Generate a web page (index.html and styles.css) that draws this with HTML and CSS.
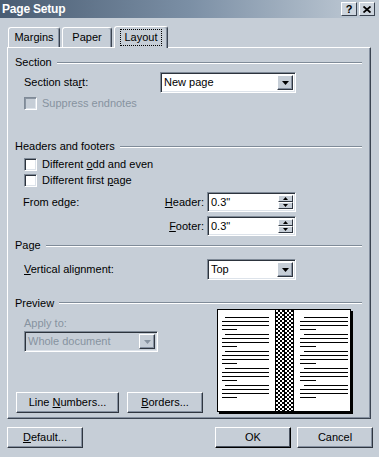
FILE: index.html
```html
<!DOCTYPE html>
<html lang="en">
<head>
    <meta charset="UTF-8">
    <meta name="viewport" content="width=device-width, initial-scale=1.0">
    <title>Page Setup</title>
    <link rel="stylesheet" href="styles.css">
</head>
<body>
    <div class="titlebar">
        <span class="title">Page Setup</span>
        <div class="title-buttons">
            <span class="tbtn">?</span>
            <span class="tbtn">
                <svg width="8" height="7" viewBox="0 0 8 7"><path d="M0.5 0.5L7.5 6.5M7.5 0.5L0.5 6.5" stroke="#000" stroke-width="1.8"/></svg>
            </span>
        </div>
    </div>

    <div class="tabs">
        <div class="tab t-margins">Margins</div>
        <div class="tab t-paper">Paper</div>
        <div class="tab t-layout active"><span class="focus">Layout</span></div>
    </div>

    <div class="panel">
        <div class="group g-section"><span>Section</span><span class="rule"></span></div>
        <div class="row r-start">
            <span class="lbl w-start">Section sta<u>r</u>t:</span>
            <div class="select s-start">
                <span class="val">New page</span>
                <span class="arrow"><svg width="7" height="4" viewBox="0 0 7 4"><path d="M0 0h7L3.5 4z"/></svg></span>
            </div>
        </div>
        <div class="row r-suppress disabled">
            <span class="check off"></span>
            <span>Suppress endnotes</span>
        </div>

        <div class="group g-headers"><span>Headers and footers</span><span class="rule"></span></div>
        <div class="row r-odd">
            <span class="check"></span>
            <span>Different <u>o</u>dd and even</span>
        </div>
        <div class="row r-first">
            <span class="check"></span>
            <span>Different first <u>p</u>age</span>
        </div>
        <div class="row r-header">
            <span class="lbl w-edge">From edge:</span>
            <span class="lbl w-hf"><u>H</u>eader:</span>
            <div class="spin">
                <span class="val">0.3"</span>
                <div class="spin-btns">
                    <span><svg width="5" height="3" viewBox="0 0 5 3"><path d="M2.5 0L5 3H0z"/></svg></span>
                    <span><svg width="5" height="3" viewBox="0 0 5 3"><path d="M0 0h5L2.5 3z"/></svg></span>
                </div>
            </div>
        </div>
        <div class="row r-footer">
            <span class="lbl w-edge"></span>
            <span class="lbl w-hf"><u>F</u>ooter:</span>
            <div class="spin">
                <span class="val">0.3"</span>
                <div class="spin-btns">
                    <span><svg width="5" height="3" viewBox="0 0 5 3"><path d="M2.5 0L5 3H0z"/></svg></span>
                    <span><svg width="5" height="3" viewBox="0 0 5 3"><path d="M0 0h5L2.5 3z"/></svg></span>
                </div>
            </div>
        </div>

        <div class="group g-page"><span>Page</span><span class="rule"></span></div>
        <div class="row r-valign">
            <span class="lbl w-valign"><u>V</u>ertical alignment:</span>
            <div class="select s-valign">
                <span class="val">Top</span>
                <span class="arrow"><svg width="7" height="4" viewBox="0 0 7 4"><path d="M0 0h7L3.5 4z"/></svg></span>
            </div>
        </div>

        <div class="group g-preview"><span>Preview</span><span class="rule"></span></div>
        <div class="preview-area">
            <div class="preview-left">
                <span class="apply-label">Apply to:</span>
                <div class="select s-apply disabled">
                    <span class="val">Whole document</span>
                    <span class="arrow"><svg width="7" height="4" viewBox="0 0 7 4"><path d="M0 0h7L3.5 4z"/></svg></span>
                </div>
                <div class="preview-buttons">
                    <span class="btn b-lines"><span>Line <u>N</u>umbers...</span></span>
                    <span class="btn b-borders"><span><u>B</u>orders...</span></span>
                </div>
            </div>
            <div class="book">
                <div class="page page-l">
                    <div class="para"><i></i><i></i><i></i><i></i></div>
                    <div class="para"><i></i><i></i><i></i><i></i></div>
                    <div class="para"><i></i><i></i><i></i><i></i></div>
                    <div class="para"><i></i><i></i><i></i><i></i></div>
                    <div class="para"><i></i><i></i><i></i><i></i></div>
                </div>
                <div class="gutter"><span class="chk"></span><span class="seam"></span><span class="chk"></span></div>
                <div class="page page-r">
                    <div class="para"><i></i><i></i><i></i><i></i></div>
                    <div class="para"><i></i><i></i><i></i><i></i></div>
                    <div class="para"><i></i><i></i><i></i><i></i></div>
                    <div class="para"><i></i><i></i><i></i><i></i></div>
                    <div class="para"><i></i><i></i><i></i><i></i></div>
                </div>
            </div>
        </div>
    </div>

    <div class="footer">
        <span class="btn"><span><u>D</u>efault...</span></span>
        <span class="spacer"></span>
        <span class="btn default">OK</span>
        <span class="btn">Cancel</span>
    </div>
</body>
</html>
```

FILE: styles.css
```css
*{
    box-sizing: border-box;
}
body{
    margin: 0;
    width: 379px;
    height: 457px;
    overflow: hidden;
    background: #c6ced7;
    font-family: "Liberation Sans", Arial, sans-serif;
    font-size: 11px;
    line-height: 13px;
    color: #000;
}
u{
    text-decoration-thickness: 1px;
    text-underline-offset: 1px;
}

/* title bar */
.titlebar{
    height: 18px;
    display: flex;
    align-items: center;
    justify-content: space-between;
    padding: 0 4px 0 2px;
    background: linear-gradient(to right, #4a5d73, #7b8fa5 50%, #c4ced8);
}
.title{
    color: #fff;
    font-weight: bold;
    font-size: 12px;
    letter-spacing: -0.2px;
}
.title-buttons{
    display: flex;
    gap: 2px;
}
.tbtn{
    width: 16px;
    height: 14px;
    display: flex;
    align-items: center;
    justify-content: center;
    background: #cdd5de;
    border: 1px solid;
    border-color: #fff #3a4350 #3a4350 #fff;
    font-weight: bold;
    font-size: 11px;
}

/* tabs */
.tabs{
    height: 29px;
    display: flex;
    align-items: flex-end;
    gap: 2px;
    padding-left: 8px;
}
.tab{
    height: 20px;
    display: flex;
    align-items: center;
    justify-content: center;
    border: 1px solid;
    border-bottom: none;
    border-color: #fff #3a4350 transparent #fff;
    border-radius: 3px 3px 0 0;
    box-shadow: inset -1px 0 #8590a0;
}
.t-margins{ width: 52px; }
.t-paper{ width: 50px; }
.t-layout{ width: 54px; }
.tab.active{
    height: 22px;
    margin-bottom: -1px;
    position: relative;
    z-index: 1;
    background: #c6ced7;
}
.focus{
    outline: 1px dotted #000;
    padding: 1px 3px;
}

/* panel */
.panel{
    margin: 0 8px 0 7px;
    padding: 0 7px 5px 7px;
    border: 1px solid;
    border-color: #fff #3a4350 #3a4350 #fff;
    box-shadow: inset -1px -1px #8590a0;
}
.group{
    height: 13px;
    display: flex;
    align-items: center;
}
.rule{
    flex: 1;
    margin: 0 1px 0 5px;
    border-top: 1px solid #7f8b98;
    border-bottom: 1px solid #fff;
}
.g-section{ margin-top: 8px; }
.g-headers{ margin-top: 30px; }
.g-page{ margin-top: 3px; }
.g-preview{ margin-top: 17px; height: 12px; }

.row{
    display: flex;
    align-items: center;
    margin-left: 9px;
}
.r-start{ margin-top: 3px; }
.r-suppress{ margin-top: 4px; }
.r-odd{ margin-top: 5px; }
.r-first{ margin-top: 3px; }
.r-header{ margin-top: 5px; margin-left: 8px; }
.r-footer{ margin-top: 4px; margin-left: 8px; }
.r-valign{ margin-top: 7px; }
.disabled{
    color: #8793a0;
}

.w-start{ width: 136px; }
.w-edge{ width: 130px; }
.w-hf{ width: 51px; text-align: right; }
.w-valign{ width: 183px; }

/* sunken fields */
.select, .spin{
    display: flex;
    align-items: center;
    background: #fff;
    border: 1px solid;
    border-color: #7f8a97 #fff #fff #7f8a97;
    box-shadow: inset 1px 1px #2c333c, inset -1px -1px #dde3ea;
    padding: 2px 2px 2px 3px;
}
.select{ height: 21px; }
.spin{ height: 20px; width: 89px; margin-left: 3px; }
.val{
    flex: 1;
}
.s-start{ width: 136px; }
.s-valign{ width: 89px; }
.arrow{
    width: 16px;
    height: 100%;
    display: flex;
    align-items: center;
    justify-content: center;
    background: #c6ced7;
    border: 1px solid;
    border-color: #fff #2f3640 #2f3640 #fff;
    box-shadow: inset -1px -1px #8590a0;
}
.select.disabled{
    background: #c6ced7;
}
.select.disabled svg{
    fill: #8793a0;
}
.spin-btns{
    width: 15px;
    height: 100%;
    display: flex;
    flex-direction: column;
}
.spin-btns span{
    flex: 1;
    display: flex;
    align-items: center;
    justify-content: center;
    background: #c6ced7;
    border: 1px solid;
    border-color: #fff #2f3640 #2f3640 #fff;
}

.check{
    width: 13px;
    height: 13px;
    margin-right: 5px;
    background: #fff;
    border: 1px solid;
    border-color: #7f8a97 #fff #fff #7f8a97;
    box-shadow: inset 1px 1px #2c333c, inset -1px -1px #dde3ea;
}
.check.off{
    background: #c6ced7;
    box-shadow: inset 1px 1px #8a95a2, inset -1px -1px #dde3ea;
}

/* preview */
.preview-area{
    height: 104px;
    display: flex;
}
.preview-left{
    width: 202px;
    display: flex;
    flex-direction: column;
}
.apply-label{
    margin: 8px 0 0 9px;
    color: #8793a0;
}
.s-apply{
    width: 134px;
    margin: 1px 0 0 9px;
}
.preview-buttons{
    margin: auto 0 0 1px;
    display: flex;
    gap: 8px;
}
.b-lines{ width: 103px; }
.b-borders{ width: 76px; }

.book{
    width: 134px;
    height: 103px;
    display: flex;
    background: #fff;
    border: 1px solid #000;
    box-shadow: 2px 2px 0 #000;
}
.page{
    overflow: hidden;
    padding-top: 7px;
}
.page-l{ width: 57px; padding-left: 4px; }
.page-r{ flex: 1; padding-left: 6px; }
.para{
    margin-bottom: 4px;
}
.para i{
    display: block;
    height: 1px;
    margin-bottom: 3px;
    background: #000;
    width: 47px;
}
.para i:first-child{ margin-left: 3px; width: 44px; }
.para i:last-child{ width: 15px; }
.page-r .para i{ width: 48px; }
.page-r .para i:first-child{ margin-left: 4px; width: 44px; }
.page-r .para i:last-child{ width: 16px; }
.gutter{
    width: 19px;
    display: flex;
    border-left: 1px solid #000;
    border-right: 1px solid #000;
}
.chk{
    flex: 1;
    background: repeating-conic-gradient(#000 0 25%, #fff 0 50%) 0 0 / 4px 4px;
}
.seam{
    width: 1px;
    background: #000;
}

/* buttons */
.btn{
    height: 21px;
    display: flex;
    align-items: center;
    justify-content: center;
    background: #c6ced7;
    border: 1px solid;
    border-color: #fff #2f3640 #2f3640 #fff;
    box-shadow: inset -1px -1px #8590a0;
}
.btn.default{
    border-color: #fff #000 #000 #fff;
    box-shadow: inset -1px -1px #4a5360;
}
.footer{
    display: flex;
    gap: 6px;
    margin-top: 8px;
    padding: 0 6px 0 7px;
}
.footer .btn{
    width: 76px;
}
.spacer{
    flex: 1;
}
```
